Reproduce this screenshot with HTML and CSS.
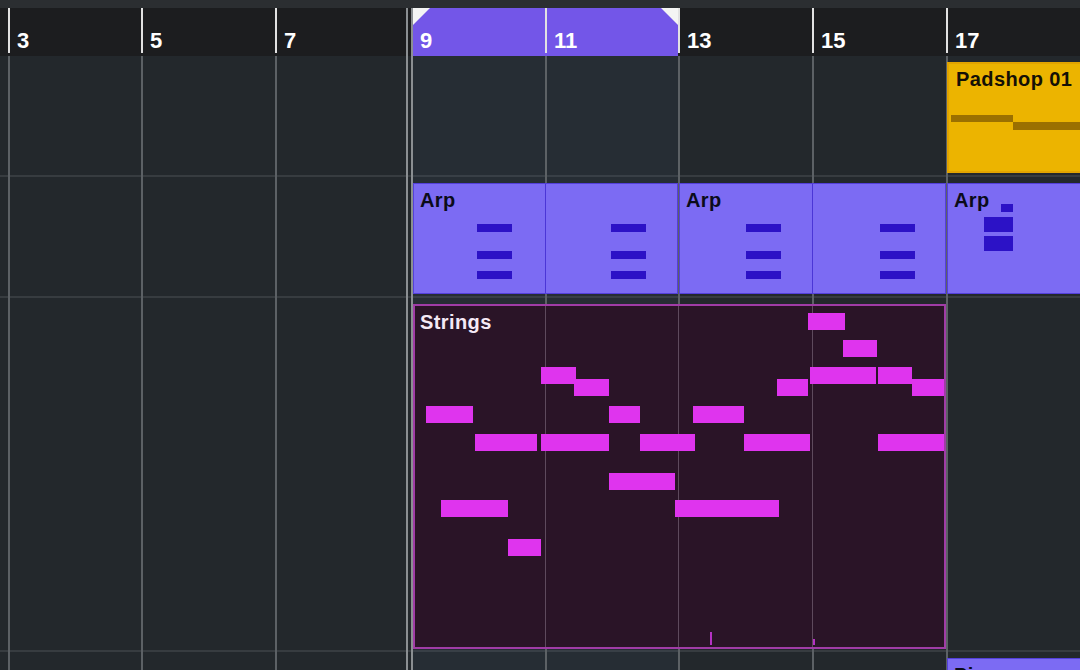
FILE: index.html
```html
<!DOCTYPE html>
<html lang="en">

<head>
  <meta charset="UTF-8">
  <meta name="viewport" content="width=device-width, initial-scale=1.0">
  <title>Project</title>
  <link rel="stylesheet" href="styles.css">
</head>

<body>
  <div class="topbar"></div>

  <!-- Ruler with bar numbers and loop range -->
  <div class="ruler">
    <div class="bar empty"></div>
    <div class="bar">3</div>
    <div class="bar">5</div>
    <div class="bar">7</div>
    <div class="bar loop-start">9</div>
    <div class="bar loop-end">11</div>
    <div class="bar">13</div>
    <div class="bar">15</div>
    <div class="bar">17</div>
  </div>

  <div class="arrange">
    <!-- Bar grid behind the tracks -->
    <div class="gridlines">
      <div class="gl none"></div>
      <div class="gl"></div>
      <div class="gl"></div>
      <div class="gl"></div>
      <div class="gl none shade"></div>
      <div class="gl shade"></div>
      <div class="gl"></div>
      <div class="gl"></div>
      <div class="gl"></div>
    </div>

    <!-- Track 1: Padshop -->
    <div class="lane">
      <div class="part pad open gap" style="grid-column: 9 / 10">
        <span class="label">Padshop 01</span>
        <div class="note" style="left: 2px; top: 51px; width: 62px; height: 7px"></div>
        <div class="note" style="left: 64px; top: 58px; width: 80px; height: 8px"></div>
      </div>
    </div>

    <!-- Track 2: Arp -->
    <div class="lane">
      <div class="part arp" style="grid-column: 5 / 7">
        <span class="label">Arp</span>
        <div class="barline" style="left: 131px"></div>
        <div class="note" style="left: 63px; top: 40px"></div>
        <div class="note" style="left: 63px; top: 67px"></div>
        <div class="note" style="left: 63px; top: 87px"></div>
        <div class="note" style="left: 197px; top: 40px"></div>
        <div class="note" style="left: 197px; top: 67px"></div>
        <div class="note" style="left: 197px; top: 87px"></div>
      </div>
      <div class="part arp gap" style="grid-column: 7 / 9">
        <span class="label">Arp</span>
        <div class="barline" style="left: 132px"></div>
        <div class="note" style="left: 66px; top: 40px"></div>
        <div class="note" style="left: 66px; top: 67px"></div>
        <div class="note" style="left: 66px; top: 87px"></div>
        <div class="note" style="left: 200px; top: 40px"></div>
        <div class="note" style="left: 200px; top: 67px"></div>
        <div class="note" style="left: 200px; top: 87px"></div>
      </div>
      <div class="part arp open gap" style="grid-column: 9 / 10">
        <span class="label">Arp</span>
        <div class="note" style="left: 53px; top: 20px; width: 12px"></div>
        <div class="note" style="left: 36px; top: 33px; width: 29px; height: 15px"></div>
        <div class="note" style="left: 36px; top: 52px; width: 29px; height: 15px"></div>
      </div>
    </div>

    <!-- Track 3: Strings -->
    <div class="lane tall">
      <div class="part strings" style="grid-column: 5 / 9">
        <span class="label">Strings</span>
        <div class="barline" style="left: 130px"></div>
        <div class="barline" style="left: 263px"></div>
        <div class="barline" style="left: 397px"></div>

        <div class="note" style="left: 393px; top: 7px; width: 37px"></div>
        <div class="note" style="left: 428px; top: 34px; width: 34px"></div>
        <div class="note" style="left: 126px; top: 61px; width: 35px"></div>
        <div class="note" style="left: 159px; top: 73px; width: 35px"></div>
        <div class="note" style="left: 395px; top: 61px; width: 66px"></div>
        <div class="note" style="left: 463px; top: 61px; width: 34px"></div>
        <div class="note" style="left: 497px; top: 73px; width: 32px"></div>
        <div class="note" style="left: 362px; top: 73px; width: 31px"></div>
        <div class="note" style="left: 11px; top: 100px; width: 47px"></div>
        <div class="note" style="left: 194px; top: 100px; width: 31px"></div>
        <div class="note" style="left: 278px; top: 100px; width: 51px"></div>
        <div class="note" style="left: 60px; top: 128px; width: 62px"></div>
        <div class="note" style="left: 126px; top: 128px; width: 68px"></div>
        <div class="note" style="left: 225px; top: 128px; width: 55px"></div>
        <div class="note" style="left: 329px; top: 128px; width: 66px"></div>
        <div class="note" style="left: 463px; top: 128px; width: 66px"></div>
        <div class="note" style="left: 194px; top: 167px; width: 66px"></div>
        <div class="note" style="left: 26px; top: 194px; width: 67px"></div>
        <div class="note" style="left: 260px; top: 194px; width: 104px"></div>
        <div class="note" style="left: 93px; top: 233px; width: 33px"></div>

        <div class="tick" style="left: 295px; top: 326px; height: 13px"></div>
        <div class="tick" style="left: 398px; top: 333px; height: 6px"></div>
      </div>
    </div>

    <!-- Track 4: Piano -->
    <div class="lane last">
      <div class="part arp open gap" style="grid-column: 9 / 10">
        <span class="label">Piano</span>
      </div>
    </div>
  </div>

  <div class="cursor"></div>
</body>

</html>
```

FILE: styles.css
```css
:root {
  --cols: 8px 133px 134px 138px 132px 133px 134px 134px 1fr;
}

* {
  box-sizing: border-box;
}

body {
  position: relative;
  width: 1080px;
  height: 670px;
  margin: 0;
  overflow: hidden;
  background-color: #23282c;
  font-family: "Liberation Sans", Arial, sans-serif;
  font-weight: bold;
}

.topbar {
  height: 8px;
  background-color: #2b2e31;
}

/* Ruler */

.ruler {
  display: grid;
  grid-template-columns: var(--cols);
  height: 48px;
  background-color: #1c1d1f;
}

.bar {
  position: relative;
  padding: 22px 0 0 9px;
  font-size: 22px;
  line-height: 22px;
  color: #ffffff;
}

.bar::before {
  content: "";
  position: absolute;
  left: 0;
  top: 0;
  width: 2px;
  height: 45px;
  background-color: #e2e2e2;
}

.bar.empty::before,
.bar.loop-start::before {
  display: none;
}

.loop-start,
.loop-end {
  background-color: #7356e8;
}

.loop-start {
  padding-left: 7px;
}

.loop-start::after {
  content: "";
  position: absolute;
  top: 0;
  left: 0;
  border-style: solid;
  border-width: 17px 17px 0 0;
  border-color: #f4f4f4 transparent transparent transparent;
}

.loop-end::after {
  content: "";
  position: absolute;
  top: 0;
  right: 0;
  border-style: solid;
  border-width: 0 17px 17px 0;
  border-color: transparent #f4f4f4 transparent transparent;
}

/* Tracks */

.arrange {
  position: relative;
  height: 614px;
}

.gridlines {
  position: absolute;
  inset: 0;
  display: grid;
  grid-template-columns: var(--cols);
}

.gl {
  border-left: 2px solid #5c6165;
}

.gl.none {
  border-left: none;
}

.gl.shade {
  background-color: rgba(70, 100, 130, 0.1);
}

.lane {
  display: grid;
  grid-template-columns: var(--cols);
  align-items: start;
  height: 121px;
  padding-top: 6px;
  border-bottom: 2px solid #373c40;
}

.lane.tall {
  height: 354px;
}

.lane.last {
  height: 18px;
  border-bottom: none;
}

/* Parts */

.part {
  position: relative;
  height: 111px;
  overflow: hidden;
  font-size: 20px;
  line-height: 20px;
  letter-spacing: 0.4px;
}

.part.gap {
  margin-left: 1px;
}

.part.open {
  border-right: none;
}

.label {
  position: relative;
  z-index: 1;
}

.note,
.barline,
.tick {
  position: absolute;
}

.barline {
  top: 0;
  bottom: 0;
  width: 1px;
}

.arp {
  padding: 6px;
  border: 1px solid #5440da;
  background-color: #7c6bf3;
  color: #0b0b1a;
}

.arp .note {
  width: 35px;
  height: 8px;
  background-color: #2c12c6;
}

.arp .barline {
  background-color: #4b36d6;
}

.pad {
  padding: 5px 7px;
  border: 2px solid #e2a400;
  background-color: #ecb400;
  color: #141006;
}

.pad .note {
  background-color: #9b7000;
}

.strings {
  height: 345px;
  padding: 6px 5px;
  border: 2px solid #a03ca6;
  background-color: #2a1427;
  color: #f5e9f5;
}

.strings .note {
  height: 17px;
  background-color: #df34ee;
}

.strings .barline {
  background-color: #5e4a5d;
}

.strings .tick {
  width: 2px;
  background-color: #b532c4;
}

/* Project cursor */

.cursor {
  position: absolute;
  top: 8px;
  bottom: 0;
  left: 406px;
  width: 7px;
  border-left: 2px solid #8b8f92;
  border-right: 2px solid #8b8f92;
}
```
